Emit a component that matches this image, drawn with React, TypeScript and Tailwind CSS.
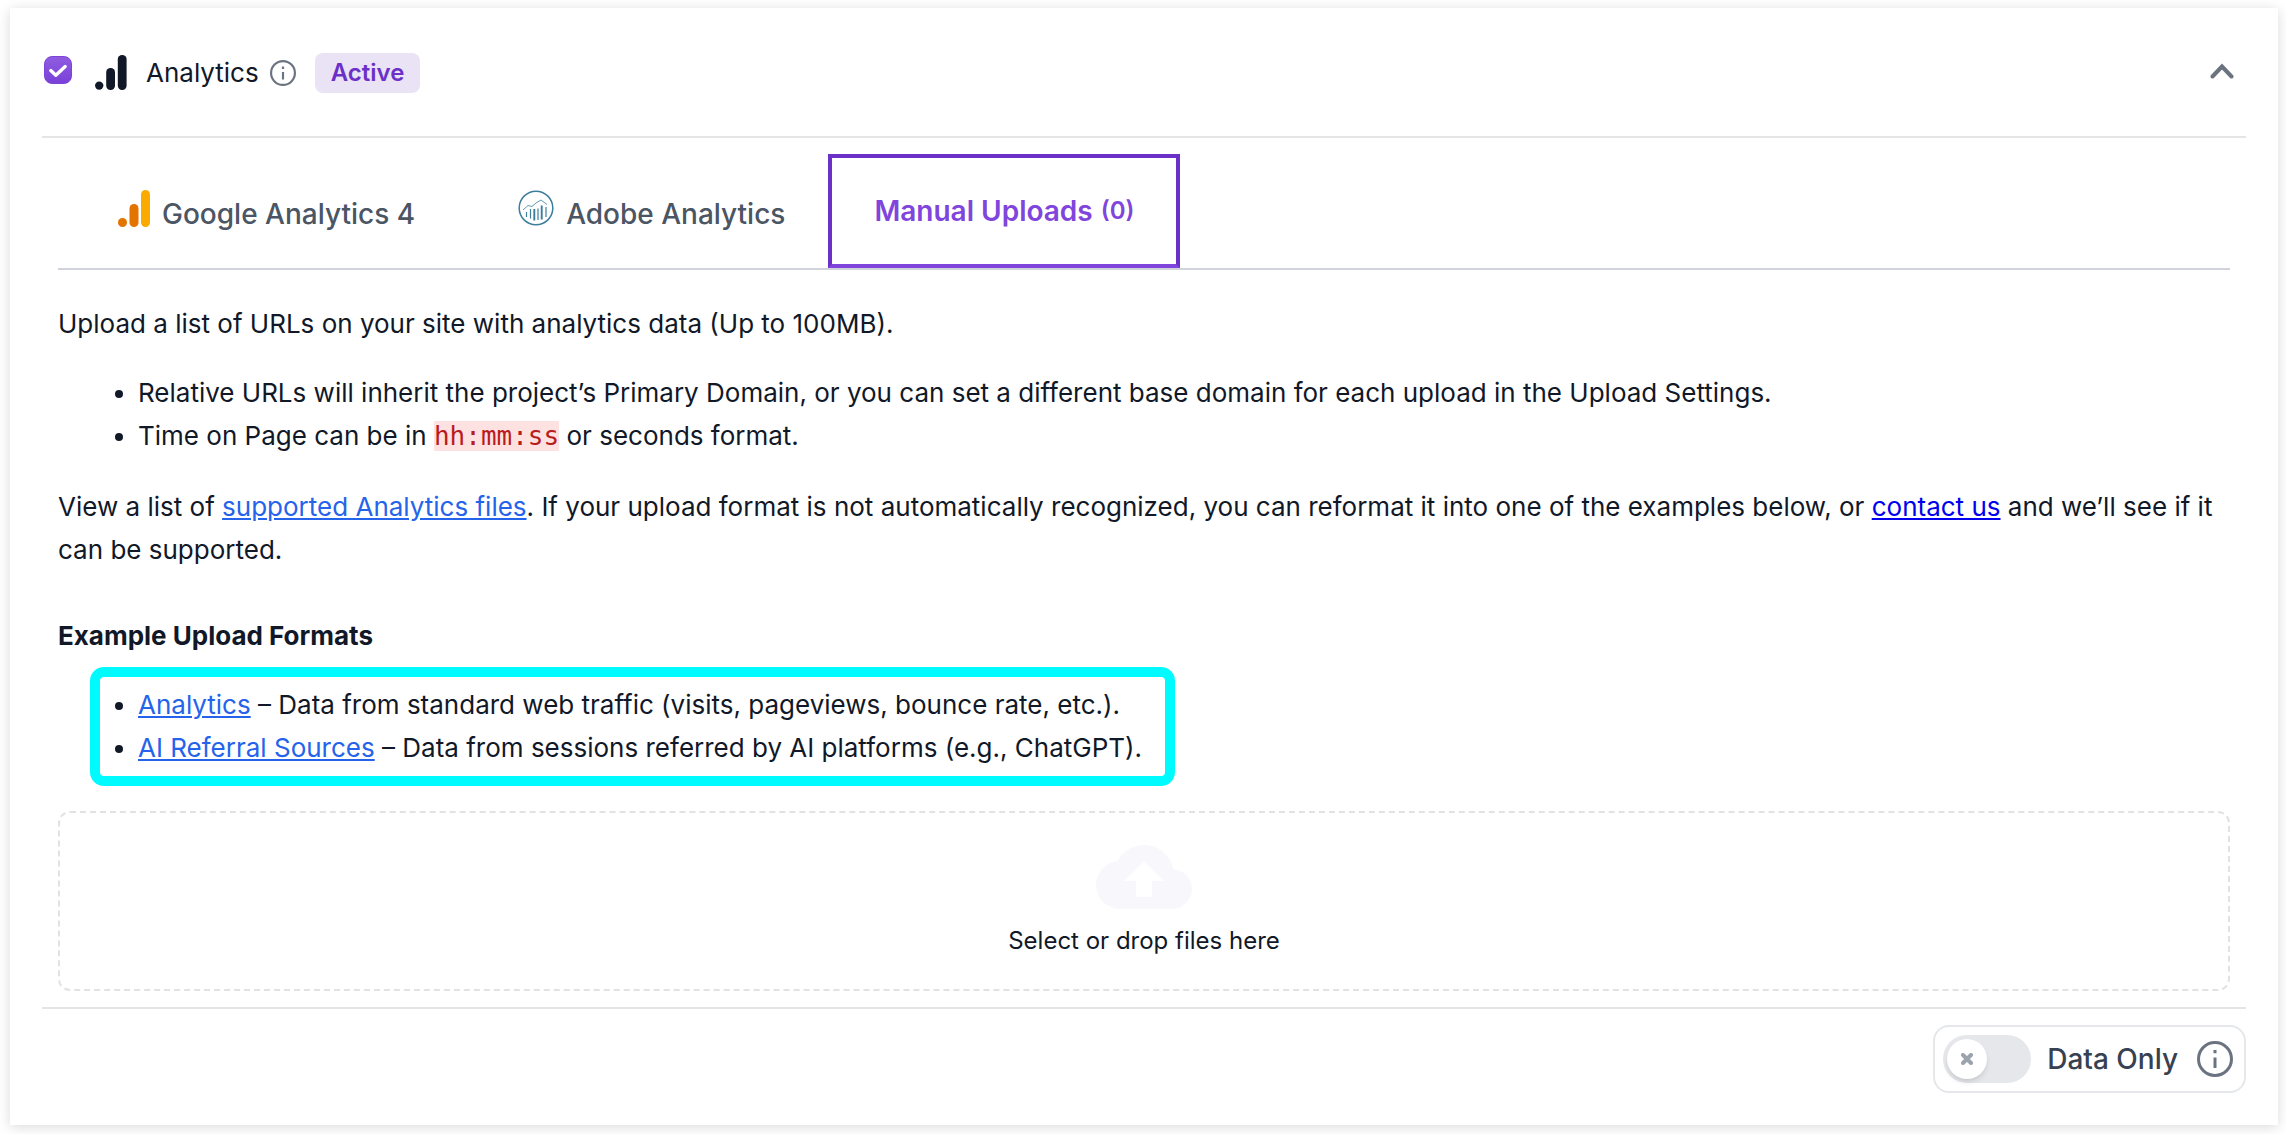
import type { ReactNode } from 'react';
import { useState } from 'react';

const tabs = [
  { id: 'ga4', label: 'Google Analytics 4' },
  { id: 'adobe', label: 'Adobe Analytics' },
];

const AnalyticsIcon = () => (
  <svg viewBox="0 0 32 35" className="h-[35px] w-8 shrink-0 fill-[#111827]" aria-hidden="true">
    <circle cx="4.2" cy="30.6" r="4.2" />
    <rect x="11.2" y="13" width="8.800" height="22" rx="4.2" />
    <rect x="22.800" y="0" width="8.800" height="35" rx="4.2" />
  </svg>
);

const GoogleAnalyticsIcon = () => (
  <svg viewBox="0 0 32 37" className="h-[37px] w-8 shrink-0" aria-hidden="true">
    <circle cx="4.5" cy="32.5" r="4.5" fill="#e37400" />
    <rect x="11.5" y="14" width="9" height="23" rx="4.5" fill="#e37400" />
    <rect x="23" y="0" width="9" height="37" rx="4.5" fill="#f9ab00" />
  </svg>
);

const AdobeAnalyticsIcon = () => (
  <svg viewBox="0 0 36 36" className="size-9 shrink-0" fill="none" stroke="#3d7f9b" aria-hidden="true">
    <circle cx="18" cy="18" r="16.800" strokeWidth="1.500" />
    <path d="M5 20l5-4.500 4 1 4-3.500 5-3 6 4.500" strokeWidth="0.8" />
    <path d="M8.500 22v5M12.500 19v9.500M20 18.500v11.500M28 17v10" strokeWidth="1.200" />
    <path d="M16.300 19v11.500M23.700 15.500v14" strokeWidth="1.900" />
  </svg>
);

const InfoIcon = ({ className }: { className: string }) => (
  <svg viewBox="0 0 24 24" className={className} fill="none" stroke="#6b7280" strokeWidth="2" aria-hidden="true">
    <circle cx="12" cy="12" r="11" />
    <path d="M12 11v7M12 6v2.200" />
  </svg>
);

const TextLink = ({ children }: { children: ReactNode }) => (
  <a href="#" className="text-[#2563eb] underline">
    {children}
  </a>
);

export default function App() {
  const [enabled, setEnabled] = useState(true);
  const [dataOnly, setDataOnly] = useState(false);

  return (
    <main className="bg-white px-2 pt-2 pb-[9px] font-['Inter',sans-serif] text-[26px] leading-[43px] text-[#111827]">
      <section className="ml-[2px] bg-white px-8 pb-8 shadow-[0_2px_12px_rgba(0,0,0,0.15)]">
        <header className="flex h-[130px] items-start justify-between border-b-2 border-[#e5e5e5] pt-[43px]">
          <div className="flex h-[43px] items-center">
            <label className="relative mr-[23px] mb-[5px] ml-[2px] flex size-7 items-center justify-center">
              <input
                type="checkbox"
                aria-label="Enable Analytics"
                checked={enabled}
                onChange={(e) => setEnabled(e.target.checked)}
                className="size-7 appearance-none rounded-lg border border-[#7c45d8] checked:bg-linear-to-b checked:from-[#8f5ce0] checked:to-[#7a40d8]"
              />
              {enabled && (
                <svg viewBox="0 0 28 28" className="pointer-events-none absolute size-7" fill="none" stroke="white" strokeWidth="3.4" strokeLinecap="round" strokeLinejoin="round">
                  <path d="M6.8 14.6l5 4.6 9.4-8.6" />
                </svg>
              )}
            </label>
            <AnalyticsIcon />
            <h2 className="ml-[19px]">Analytics</h2>
            <button type="button" aria-label="About Analytics" className="ml-[11px]">
              <InfoIcon className="size-[26px]" />
            </button>
            <span className="ml-[19px] rounded-lg bg-[#eae3f5] px-4 text-2xl leading-10 font-semibold text-[#6b30c7]">Active</span>
          </div>
          <button type="button" aria-label="Collapse" className="mt-2 mr-3">
            <svg viewBox="0 0 24 24" className="size-6" fill="none" stroke="#6b7280" strokeWidth="4" strokeLinecap="round">
              <path d="M2.5 17.500L12 7.500l9.500 10" />
            </svg>
          </button>
        </header>

        <div className="px-4 pt-4 pb-4">
          <nav role="tablist" className="flex h-[116px] items-stretch border-b-2 border-[#d1d5db] text-[28px] font-medium text-[#4b5563]">
            {tabs.map((tab) => (
              <button key={tab.id} type="button" role="tab" aria-selected="false" className="flex items-center gap-3 pr-[43px] pb-[6px] pl-[60px]">
                {tab.id === 'ga4' ? <GoogleAnalyticsIcon /> : <AdobeAnalyticsIcon />}
                <span className="pt-3">{tab.label}</span>
              </button>
            ))}
            <button type="button" role="tab" aria-selected="true" className="flex items-center gap-2 border-4 border-[#6b30c7] border-b-[#7f45dc] px-[42px] font-semibold text-[#7f45dc]">
              Manual Uploads <span className="text-2xl">(0)</span>
            </button>
          </nav>

          <p className="mt-8">Upload a list of URLs on your site with analytics data (Up to 100MB).</p>
          <ul className="mt-[26px] list-disc pl-20">
            <li>
              Relative URLs will inherit the project’s Primary Domain, or you can set a different base domain for each upload in the Upload Settings.
            </li>
            <li>
              Time on Page can be in <code className="bg-[#fee2e2] font-['DejaVu_Sans_Mono',monospace] text-[26px] leading-none text-[#b91c1c]">hh:mm:ss</code> or seconds format.
            </li>
          </ul>
          <p className="mt-7">
            View a list of <TextLink>supported Analytics files</TextLink>. If your upload format is not automatically recognized, you can reformat it into one of the examples below, or{' '}
            <a href="#" className="text-[#0000ee] underline">contact us</a> and we’ll see if it can be supported.
          </p>

          <h3 className="mt-[43px] font-bold">Example Upload Formats</h3>
          <ul className="mt-[10px] ml-8 w-fit list-disc rounded-[14px] border-[10px] border-[#00fbff] pt-[6px] pr-[23px] pb-[7px] pl-[38px]">
            <li>
              <TextLink>Analytics</TextLink> – Data from standard web traffic (visits, pageviews, bounce rate, etc.).
            </li>
            <li>
              <TextLink>AI Referral Sources</TextLink> – Data from sessions referred by AI platforms (e.g., ChatGPT).
            </li>
          </ul>

          <button type="button" className="mt-[25px] flex h-[180px] w-full flex-col items-center rounded-xl border-2 border-dashed border-[#e2e2e2] pt-4 text-2xl">
            <svg viewBox="0 0 24 24" className="size-24 fill-[#f8f7fc]" aria-hidden="true">
              <path d="M19.350 10.040C18.670 6.590 15.640 4 12 4 9.110 4 6.600 5.640 5.350 8.040 2.340 8.360 0 10.910 0 14c0 3.310 2.690 6 6 6h13c2.760 0 5-2.240 5-5 0-2.640-2.050-4.780-4.650-4.960zM14 13v4h-4v-4H7l5-5 5 5h-3z" />
            </svg>
            <span className="leading-8">Select or drop files here</span>
          </button>
        </div>

        <footer className="flex justify-end border-t-2 border-[#e5e5e5] pt-4">
          <div className="flex h-[68px] items-center rounded-2xl border-2 border-[#e5e7eb] pr-[11px] pl-2">
            <label className="flex items-center gap-4 text-[28px] font-medium text-[#374151]">
              <input type="checkbox" role="switch" checked={dataOnly} onChange={(e) => setDataOnly(e.target.checked)} className="peer sr-only" />
              <span className="flex h-12 w-[88px] items-center rounded-full bg-[#e5e7eb] p-1 peer-checked:justify-end peer-checked:bg-[#7f45dc]">
                <span className="flex size-10 items-center justify-center rounded-full bg-white shadow-md">
                  <svg viewBox="0 0 12 12" className="size-3" stroke="#9ca3af" strokeWidth="4" strokeLinecap="round">
                    <path d="M2 2l8 8M10 2l-8 8" />
                  </svg>
                </span>
              </span>
              Data Only
            </label>
            <button type="button" aria-label="About Data Only" className="ml-[19px]">
              <InfoIcon className="size-9" />
            </button>
          </div>
        </footer>
      </section>
    </main>
  );
}
